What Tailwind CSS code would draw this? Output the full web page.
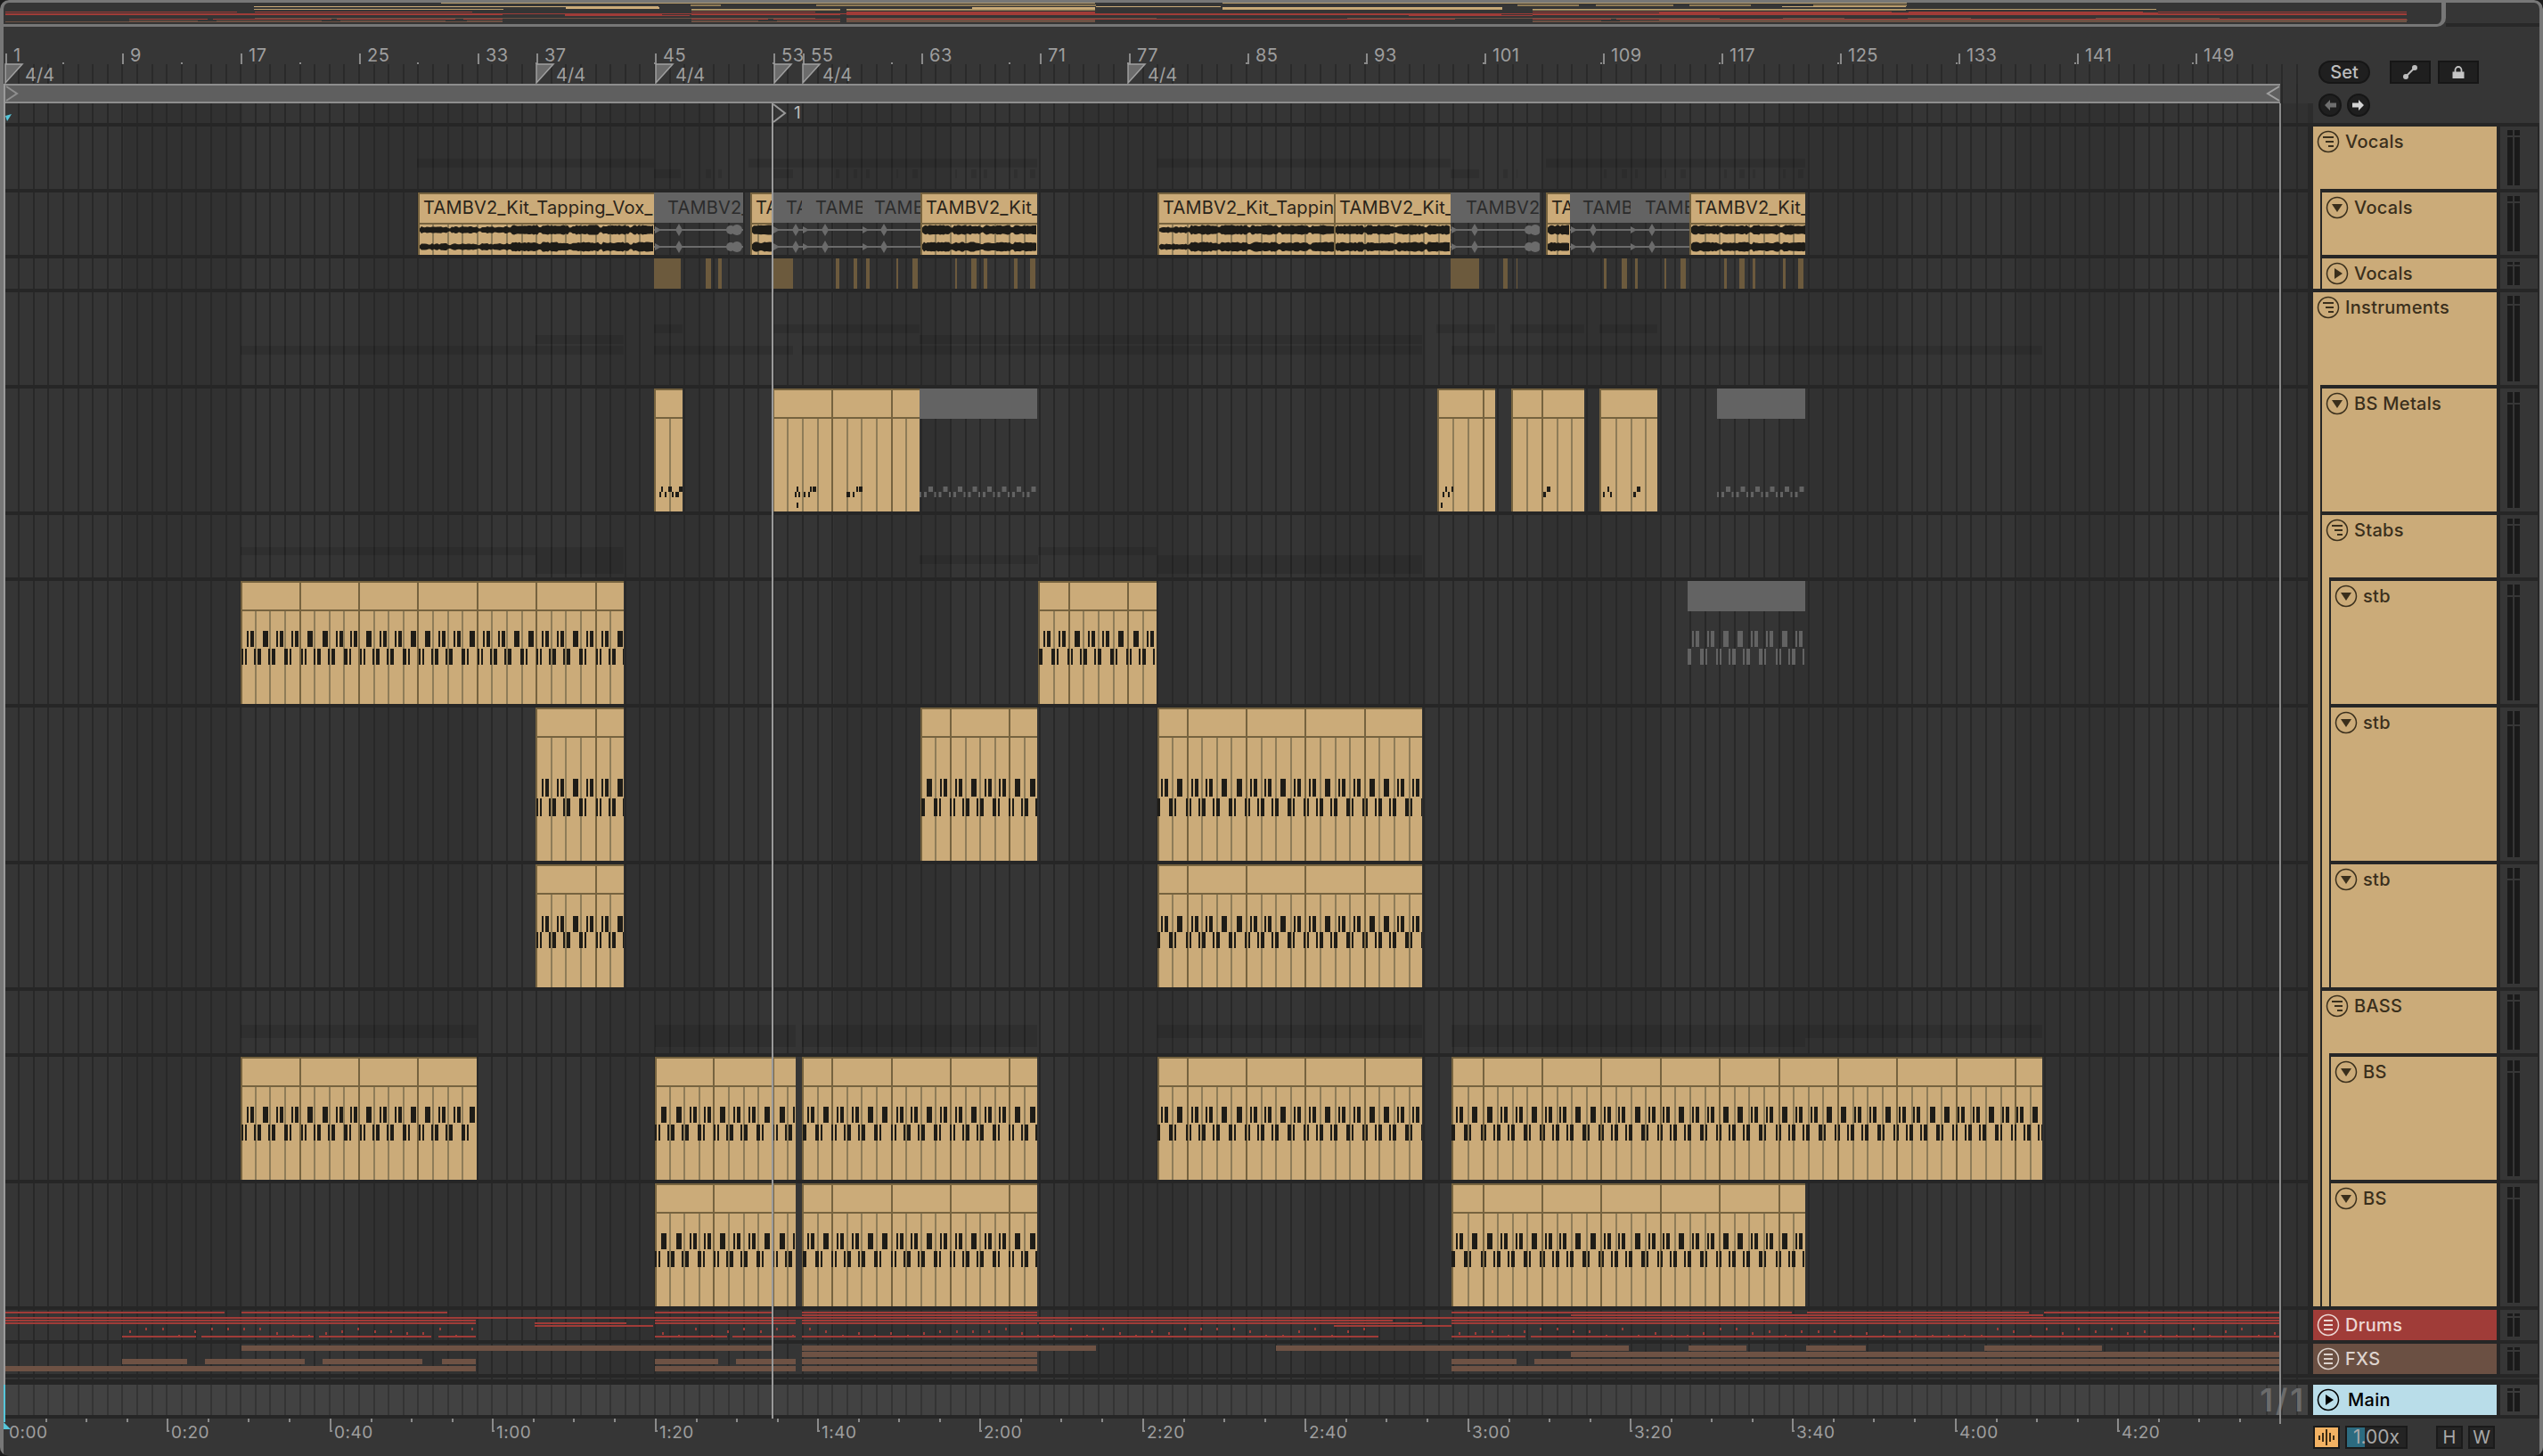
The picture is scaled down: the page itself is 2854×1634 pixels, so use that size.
<!DOCTYPE html>
<html>
<head>
<meta charset="utf-8">
<script src="https://cdn.jsdelivr.net/npm/@tailwindcss/browser@4"></script>
<title>Arrangement</title>
</head>
<body class="bg-[#1c1c1c]">
<div id="app" class="relative w-[2854px] h-[1634px] overflow-hidden rounded-[10px] bg-[#363636] font-['Inter','Liberation_Sans',sans-serif] flex flex-col">

  <!-- overview strip -->
  <div class="flex h-[30px] shrink-0">
    <div id="overview" class="relative w-[2745px] h-[30px] bg-[#353535] border-b-[3px] border-r-[5px] border-[#777777] rounded-br-[10px] overflow-hidden"></div>
    <div class="flex-1 flex flex-col"><div class="flex-1"></div><div class="h-[4px] bg-[#282828]"></div></div>
  </div>

  <!-- header: ruler + locators + transport buttons -->
  <div class="flex h-[108px] shrink-0 pl-[6px]">
    <div class="w-[2584px] flex flex-col">
      <div id="ruler" class="relative h-[42px]"></div>
      <div id="sig" class="relative h-[22px] [background-image:repeating-linear-gradient(90deg,transparent_0,transparent_14.2px,#2a2a2a_14.2px,#2a2a2a_16.2px,transparent_16.2px,transparent_16.6px)]"></div>
      <div class="h-[22px] [background-image:repeating-linear-gradient(90deg,transparent_0,transparent_14.2px,#282828_14.2px,#282828_16.2px,transparent_16.2px,transparent_16.6px)]">
        <div class="relative w-[2553px] h-full bg-[#5f5f5f] border-y-2 border-[#8e8e8e]">
          <svg class="absolute left-[0px] top-0" width="16" height="18"><path d="M1 1 L13 9 L1 17" fill="none" stroke="#8f8f8f" stroke-width="2"/></svg>
          <svg class="absolute right-[0px] top-0" width="16" height="18"><path d="M15 1 L2 9 L15 17" fill="none" stroke="#a0a0a0" stroke-width="2"/></svg>
        </div>
      </div>
      <div id="locrow" class="relative h-[22px] [background-image:repeating-linear-gradient(90deg,transparent_0,transparent_14.2px,#282828_14.2px,#282828_16.2px,transparent_16.2px,transparent_16.6px),repeating-linear-gradient(90deg,#353535_0,#353535_132.8px,#313131_132.8px,#313131_265.6px)]">
        <svg class="absolute left-0 top-[12px]" width="8" height="10"><path d="M0 2 L7 0 L2 8Z" fill="#57c6da"/></svg>
        <svg class="absolute left-[860px] top-0" width="18" height="22"><path d="M2 1 L15 11 L2 21" fill="none" stroke="#9a9a9a" stroke-width="2"/></svg>
        <span class="absolute left-[885px] top-[1px] text-[19px] leading-[20px] text-[#bdbdbd]">1</span>
      </div>
    </div>
    <div class="w-[6px] h-[22px] self-end bg-[#2c2c2c]"></div>
    <div class="flex-1 flex flex-col pl-[6px] pt-[38px] gap-[11px]">
      <div class="flex items-center h-[26px]">
        <div class="w-[58px] h-[26px] rounded-full bg-[#1f1f1f] border-2 border-[#161616] flex items-center justify-center text-[20px] font-medium text-[#bdbdbd]">Set</div>
        <div class="ml-[22px] w-[46px] h-[26px] bg-[#1f1f1f] border-2 border-[#161616] flex items-center justify-center">
          <svg width="18" height="18" viewBox="0 0 18 18"><path d="M4 14 L14 4" stroke="#bdbdbd" stroke-width="2"/><circle cx="4" cy="14" r="3" fill="#bdbdbd"/><circle cx="14" cy="4" r="3" fill="#bdbdbd"/></svg>
        </div>
        <div class="ml-[8px] w-[46px] h-[26px] bg-[#1f1f1f] border-2 border-[#161616] flex items-center justify-center">
          <svg width="16" height="16" viewBox="0 0 16 16"><path d="M4.5 8 V5.5 A3.5 3.5 0 0 1 11.500 5.500 V8" fill="none" stroke="#c4c4c4" stroke-width="1.800"/><rect x="1.500" y="7.500" width="13" height="7.500" fill="#c4c4c4"/></svg>
        </div>
      </div>
      <div class="flex gap-[6px]">
        <div class="w-[26px] h-[26px] rounded-full bg-[#1f1f1f] border-2 border-[#161616] flex items-center justify-center">
          <svg width="16" height="14" viewBox="0 0 16 14"><path d="M8 1 L2 7 L8 13 V9.500 H15 V4.500 H8Z" fill="#6f6f6f"/></svg>
        </div>
        <div class="w-[26px] h-[26px] rounded-full bg-[#1f1f1f] border-2 border-[#161616] flex items-center justify-center">
          <svg width="16" height="14" viewBox="0 0 16 14"><path d="M8 1 L14 7 L8 13 V9.500 H1 V4.500 H8Z" fill="#d4d4d4"/></svg>
        </div>
      </div>
    </div>
  </div>

  <!-- tracks -->
  <div id="tracks" class="flex flex-col gap-[4px] pt-[4px] pb-[4px] pl-[6px] bg-[#262626] shrink-0"></div>

  <!-- bottom: time ruler + status buttons -->
  <div class="flex flex-1 pl-[6px]">
    <div id="timeline" class="relative w-[2584px] h-full"></div>
    <div class="w-[6px]"></div>
    <div class="flex items-start pt-[8px] text-[#a8a8a8]">
      <div class="w-[30px] h-[26px] bg-[#f3b263] border-2 border-[#1a1a1a] flex items-center justify-center">
        <svg width="20" height="18" viewBox="0 0 20 18" fill="#3d2c14"><rect x="1" y="7" width="2" height="5"/><rect x="5" y="4" width="2" height="10"/><rect x="9" y="0" width="2" height="18"/><rect x="13" y="4" width="2" height="10"/><rect x="17" y="7" width="2" height="5"/></svg>
      </div>
      <div class="ml-[6px] relative w-[70px] h-[26px] bg-[#242424] border-2 border-[#1a1a1a] flex items-center justify-center">
        <div class="absolute left-0 top-0 bottom-0 w-[20px] bg-[#2c6b80]"></div>
        <span class="relative text-[21px] leading-[22px]">1.00x</span>
      </div>
      <div class="ml-[32px] w-[30px] h-[26px] bg-[#242424] border-2 border-[#1a1a1a] flex items-center justify-center text-[20px] leading-[22px]">H</div>
      <div class="ml-[6px] w-[30px] h-[26px] bg-[#242424] border-2 border-[#1a1a1a] flex items-center justify-center text-[20px] leading-[22px]">W</div>
    </div>
  </div>

  <!-- playhead-like markers over the arrangement -->
  <div class="absolute left-[4px] top-[94px] h-[1460px] w-[2px] bg-[#9a9a9a]"></div>
  <div class="absolute left-[4px] top-[1554px] h-[42px] w-[2px] bg-[#57c6da]"></div>
  <div class="absolute left-[866px] top-[116px] h-[1476px] w-[2px] bg-[#9a9a9a]"></div>
  <div class="absolute left-[2558px] top-[116px] h-[1482px] w-[2px] bg-[#8a8a8a]"></div>
  <svg class="absolute left-[4px] top-[1596px]" width="12" height="10"><path d="M0 0 L8 8 H0Z" fill="#57c6da"/></svg>

  <!-- window frame -->
  <div class="absolute left-0 right-0 top-0 h-[1640px] rounded-[10px] border-x-[4px] border-t-[3px] border-b-[3px] border-[#777777] pointer-events-none"></div>
</div>

<script>
var C_GRID='[background-image:repeating-linear-gradient(90deg,transparent_0,transparent_14.2px,#282828_14.2px,#282828_16.2px,transparent_16.2px,transparent_16.6px),repeating-linear-gradient(90deg,#353535_0,#353535_132.8px,#313131_132.8px,#313131_265.6px)]';
var C_MAIN='[background-image:repeating-linear-gradient(90deg,transparent_0,transparent_14.2px,#343434_14.2px,#343434_16.2px,transparent_16.2px,transparent_16.6px)] bg-[#424242]';
var EDGE='#76633f', BEAT='#8e7c58', INK='#1e1c17', GRAY='#636363', GRAYN='#6b6b6b';
var seed=7; function rnd(){seed=(seed*16807)%2147483647;return seed/2147483647;}
function lineX(k){return Math.round(3.6+16.6*k);}
function R(x,y,w,h,c){return '<rect x="'+x+'" y="'+y+'" width="'+w+'" height="'+h+'" fill="'+c+'"/>';}

/* ---------- note patterns ---------- */
var SEQ='abaabbaabaabbaabaabbaaba';
function notes(x0,x1,y1,y2,nh,color){
  var s='';
  for(var k=-16;k<160;k++){
    var bx=270+16.55*k, c=SEQ[((k%24)+24)%24];
    var list=c=='a'?[[7.3,2],[11.3,4]]:[[8.8,6]];
    list.forEach(function(n){var x=Math.round(bx+n[0]); if(x+n[1]>x0&&x<x1) s+=R(x-x0,y1,n[1],nh,color);});
  }
  for(var n=-4;n<40;n++){
    var b=270+66.2*n;
    [[1.3,2],[5.3,2],[15.3,2],[19.3,4],[31.3,2],[35.3,4],[49.3,4],[55.3,2]].forEach(function(m){
      var x=Math.round(b+m[0]); if(x+m[1]>x0&&x<x1) s+=R(x-x0,y2,m[1],nh,color);
    });
  }
  return s;
}
function midi(x0,x1,o,h,hh){
  var w=x1-x0,s=R(0,0,w,2,EDGE)+R(0,0,2,h,EDGE)+R(0,hh,w,2,EDGE);
  for(var k=0;k<160;k++){var x=lineX(k); if(x>x0+3&&x<x1-1){
    var major=(k%4)==0;
    s+=R(x-x0,hh+2,2,h-hh,major?EDGE:BEAT);
    if(major)s+=R(x-x0,0,2,hh,EDGE);
  }}
  s+=o;
  return '<div class="absolute top-0 bottom-0 bg-[#cbab79] overflow-hidden" style="left:'+(x0-6)+'px;width:'+w+'px"><svg class="absolute left-0 top-0" width="'+w+'" height="'+h+'">'+s+'</svg></div>';
}
function grayMidi(x0,x1,o,h,hh){
  var w=x1-x0;
  return '<div class="absolute top-0 bottom-0 overflow-hidden" style="left:'+(x0-6)+'px;width:'+w+'px"><div class="h-[34px] bg-[#636363]"></div><svg class="absolute left-0 top-0" width="'+w+'" height="'+h+'">'+o+'</svg></div>';
}
/* ---------- audio clips ---------- */
function wave(w,cy,quiet){
  var up='',dn='';
  for(var x=2;x<=w;x+=2){
    var a=(x<quiet?2.4:4)+rnd()*1.6;
    if(x%34<4) a*=0.6;
    up+='L'+x+' '+(cy-a).toFixed(1)+' ';
    dn='L'+x+' '+(cy+a).toFixed(1)+' '+dn;
  }
  return '<path d="M2 '+cy+' '+up+dn+'Z" fill="'+INK+'"/>';
}
function audio(x0,x1,text,quiet,tx){
  var w=x1-x0,h=70,s=R(0,0,w,2,EDGE)+R(0,0,2,h,EDGE)+R(0,34,w,2,EDGE);
  for(var k=0;k<160;k++){var x=lineX(k); if(x>x0+3&&x<x1-1) s+=R(x-x0,36,2,34,BEAT);}
  s+=wave(w,42,quiet||0)+wave(w,61,quiet||0);
  return '<div class="absolute top-0 bottom-0 bg-[#cbab79] overflow-hidden" style="left:'+(x0-6)+'px;width:'+w+'px">'+
   '<svg class="absolute left-0 top-0" width="'+w+'" height="70">'+s+'</svg>'+
   '<span class="absolute top-0 h-[34px] flex items-center text-[20px] tracking-[0.2px] text-[#2a241a] whitespace-nowrap" style="left:'+(tx||6)+'px">'+text+'</span></div>';
}
function ghostAudio(x0,x1,text,marks,tx){
  var w=x1-x0,s='';
  [42,61].forEach(function(cy){
    s+=R(0,cy-1,w,2,GRAYN);
    marks.forEach(function(m){
      var x=m[1]-x0;
      if(m[0]=='d') s+='<path d="M'+(x-4)+' '+cy+' L'+x+' '+(cy-7)+' L'+(x+4)+' '+cy+' L'+x+' '+(cy+7)+'Z" fill="'+GRAYN+'"/>';
      if(m[0]=='t') s+='<path d="M'+x+' '+(cy-4)+' L'+(x+7)+' '+cy+' L'+x+' '+(cy+4)+'Z" fill="'+GRAYN+'"/>';
      if(m[0]=='b') s+='<circle cx="'+x+'" cy="'+cy+'" r="5" fill="'+GRAYN+'"/><circle cx="'+(x+7)+'" cy="'+cy+'" r="6" fill="'+GRAYN+'"/>';
    });
  });
  return '<div class="absolute top-0 bottom-0 overflow-hidden" style="left:'+(x0-6)+'px;width:'+w+'px">'+
   '<div class="relative h-[34px] bg-[#636363]"><span class="absolute top-0 h-[34px] flex items-center text-[20px] tracking-[0.2px] text-[#2c2c2c] whitespace-nowrap" style="left:'+(tx||15)+'px">'+text+'</span></div>'+
   '<svg class="absolute left-0 top-0" width="'+w+'" height="70">'+s+'</svg></div>';
}
function ghost(x0,x1,y,h){return '<div class="absolute bg-black/10" style="left:'+(x0-6)+'px;width:'+(x1-x0)+'px;top:'+y+'px;height:'+h+'px"></div>';}
function bar(x0,x1,y,h,cl){return '<div class="absolute '+cl+'" style="left:'+(x0-6)+'px;width:'+(x1-x0)+'px;top:'+y+'px;height:'+h+'px"></div>';}

/* ---------- data ---------- */
var folded=[[734,764],[792,798],[806,810],[867,890],[938,942],[958,962],[972,976],[1006,1008],[1024,1030],[1072,1074],[1090,1096],[1104,1108],[1138,1142],[1156,1162],[1628,1660],[1687,1692],[1702,1703],[1800,1803],[1820,1826],[1835,1838],[1868,1870],[1886,1892],[1935,1938],[1952,1958],[1967,1970],[2001,2004],[2018,2024]];
var drumLines=[
 [1472,6,252],[1472,271,502],[1472,735,867],[1472,900,1164],[1472,1629,2011],[1472,2028,2277],[1472,2294,2558],
 [1475,900,1164],[1475,1763,2293],
 [1478,6,2558],
 [1481,6,534],[1481,735,893],[1481,900,1563],[1481,1629,2558],
 [1484,6,534],[1484,600,703],[1484,735,893],[1484,900,1164],[1484,1166,1596],[1484,1629,2558],
 [1487,600,733],[1487,1497,1629],
 [1499,137,220],[1499,226,352],[1499,358,484],[1499,492,534],[1499,735,816],[1499,822,893],[1499,900,1547],[1499,1629,1712],[1499,1718,2558]];
var fxLines=[
 [1510,271,867],[1510,900,1230],[1510,1432,1828],[1510,1895,1960],[1510,2027,2094],[1510,2227,2359],
 [1517,900,1164],[1517,1763,2558],
 [1525,137,210],[1525,230,342],[1525,362,474],[1525,496,534],[1525,735,806],[1525,826,893],[1525,900,1164],[1525,1629,1702],[1525,1722,2558],
 [1533,6,534],[1533,735,893],[1533,900,1164],[1533,1629,2558]];
function content(i,h){
  var s='';
  if(i==0){ // Vocals group overview
    s+=ghost(468,734,36,10)+ghost(840,1164,36,10)+ghost(1299,1628,36,10)+ghost(1735,2026,36,10);
    folded.forEach(function(f){s+=ghost(f[0],f[1],48,10);});
  }
  if(i==1){
    s+=audio(469,734,'TAMBV2_Kit_Tapping_Vox_',100);
    s+=ghostAudio(734,834,'TAMBV2_',[['t',735],['d',762],['b',820]]);
    s+=audio(842,867,'TA');
    s+=ghostAudio(867,900,'TA',[['t',868],['d',893]]);
    s+=ghostAudio(900,968,'TAMB',[['t',901],['d',926]]);
    s+=ghostAudio(968,1033,'TAMB',[['t',968],['d',992]],13);
    s+=audio(1033,1164,'TAMBV2_Kit_');
    s+=audio(1299,1497,'TAMBV2_Kit_Tapping_Vox_',36);
    s+=audio(1497,1628,'TAMBV2_Kit_');
    s+=ghostAudio(1628,1728,'TAMBV2_',[['t',1629],['d',1655],['b',1716]],17);
    s+=audio(1735,1762,'TA');
    s+=ghostAudio(1762,1830,'TAMB',[['t',1763],['d',1788]],14);
    s+=ghostAudio(1830,1896,'TAME',[['t',1830],['d',1854]],16);
    s+=audio(1896,2026,'TAMBV2_Kit_');
  }
  if(i==2){ folded.forEach(function(f){s+=bar(f[0],f[1],0,34,'bg-[#6c5a3d]');}); }
  if(i==3){
    s+=ghost(734,766,36,10)+ghost(867,1032,36,10)+ghost(1612,1678,36,10)+ghost(1695,1778,36,10)+ghost(1795,1860,36,10);
    s+=ghost(601,700,48,10)+ghost(1032,1596,48,10);
    s+=ghost(270,700,60,10)+ghost(734,890,60,10)+ghost(900,1596,60,10)+ghost(1629,2292,60,10);
  }
  if(i==4){
    var small=function(a){var o='';a.forEach(function(n){o+=R(n[0],n[1],n[2],6,INK);});return o;};
    s+=midi(734,766,small([[8,110,2],[6,116,2],[12,116,2],[16,110,4],[20,116,2],[24,116,4],[28,110,4]]),138,32);
    s+=midi(867,1032,small([[25,116,2],[27,110,2],[29,116,2],[35,116,2],[40,116,2],[42,110,2],[45,110,4],[27,128,2],[83,116,4],[90,116,2],[94,110,2],[97,110,4]]),138,32);
    var g='';for(var k=0;k<8;k++){g+=R(10+k*16.5,110,5,6,GRAY)+R(k*16.5,116,2,6,GRAY)+R(5+k*16.5,116,3,6,GRAY);}
    s+=grayMidi(1032,1164,g,138,32);
    s+=midi(1613,1678,small([[6,116,2],[9,110,2],[12,116,2],[16,110,2],[4,128,2]]),138,32);
    s+=midi(1696,1778,small([[36,116,3],[40,110,4]]),138,32);
    s+=midi(1795,1860,small([[4,116,2],[9,110,2],[12,116,2],[38,116,3],[42,110,4]]),138,32);
    var g2='';for(var j=0;j<6;j++){g2+=R(10+j*16.5,110,5,6,GRAY)+R(j*16.5,116,2,6,GRAY)+R(5+j*16.5,116,3,6,GRAY);}
    s+=grayMidi(1927,2026,g2,138,32);
  }
  if(i==5){
    s+=ghost(270,700,36,9)+ghost(1165,1298,36,9);
    s+=ghost(601,700,45,10)+ghost(1032,1165,45,10)+ghost(1299,1596,45,10);
    s+=ghost(601,700,55,11)+ghost(1299,1596,55,11);
  }
  function m(x0,x1,h,hh,a,b,nh){return midi(x0,x1,notes(x0,x1,a,b,nh,INK),h,hh);}
  if(i==6){
    s+=m(270,700,138,32,56,76,18)+m(1165,1298,138,32,56,76,18);
    s+=grayMidi(1894,2026,notes(1894,2026,56,76,18,GRAY),138,32);
  }
  if(i==7){ [[601,700],[1033,1164],[1299,1596]].forEach(function(c){s+=m(c[0],c[1],172,32,80,102,20);}); }
  if(i==8){ [[601,700],[1299,1596]].forEach(function(c){s+=m(c[0],c[1],138,32,58,76,18);}); }
  if(i==9){ s+=ghost(270,535,38,15)+ghost(735,893,38,15)+ghost(900,1164,38,15)+ghost(1299,1596,38,15)+ghost(1629,2292,38,15);
            s+=ghost(735,893,53,10)+ghost(900,1164,53,10)+ghost(1629,2026,53,10); }
  if(i==10){ [[270,535],[735,893],[900,1164],[1299,1596],[1629,2292]].forEach(function(c){s+=m(c[0],c[1],138,32,56,76,18);}); }
  if(i==11){ [[735,893],[900,1164],[1629,2026]].forEach(function(c){s+=m(c[0],c[1],138,32,56,76,18);}); }
  if(i==12){
    drumLines.forEach(function(l){s+=bar(l[1],l[2],l[0]-1470,2,'bg-[#a03c38]');});
    [[137,534],[735,893],[900,1547],[1629,2558]].forEach(function(r){
      for(var x=r[0]+8;x<r[1];x+=18.3){ s+=bar(Math.round(x),Math.round(x)+2,[20,25,28,23][Math.floor(rnd()*4)],3,'bg-[#a03c38]'); }
    });
  }
  if(i==13){ fxLines.forEach(function(l){ s+=bar(l[1],l[2],l[0]-1508,6,'bg-[#6e5244]');}); }
  return s;
}

/* ---------- icons ---------- */
function icon(kind,col){
  var c='<circle cx="13" cy="13" r="11.500" fill="none" stroke="'+col+'" stroke-width="1.500"/>',p='';
  if(kind=='g') p='<path d="M7 8 H19 M10 13 H19 M13 18 H19" stroke="'+col+'" stroke-width="2"/>';
  if(kind=='f') p='<path d="M8 8 H18 M8 13 H18 M8 18 H18" stroke="'+col+'" stroke-width="2"/>';
  if(kind=='d') p='<path d="M7 9 H19 L13 18Z" fill="'+col+'"/>';
  if(kind=='r') p='<path d="M10 7 L19 13 L10 19Z" fill="'+col+'"/>';
  return '<svg class="shrink-0 mt-[4px]" width="26" height="26" viewBox="0 0 26 26">'+c+p+'</svg>';
}
var rows=[
 [70,'Vocals',0,'g'],[70,'Vocals',1,'d'],[34,'Vocals',1,'r'],
 [104,'Instruments',0,'g'],[138,'BS Metals',1,'d'],[70,'Stabs',1,'g'],
 [138,'stb',2,'d'],[172,'stb',2,'d'],[138,'stb',2,'d'],
 [70,'BASS',1,'g'],[138,'BS',2,'d'],[138,'BS',2,'d'],
 [34,'Drums',0,'f','red'],[34,'FXS',0,'f','brown']];
var html='';
rows.forEach(function(r,i){
  var h=r[0],lv=r[2],t=r[4];
  var bg=t=='red'?'bg-[#a03c38]':t=='brown'?'bg-[#6b5043]':'bg-[#cbab79]';
  var fg=t=='red'?'text-[#ecd7d3]':t=='brown'?'text-[#ddd3cd]':'text-[#3a2f1c]';
  var col=t=='red'?'#ecd7d3':t=='brown'?'#ddd3cd':'#3a2f1c';
  var nest='';
  if(lv>=1) nest+='<div class="absolute left-0 top-[-4px] bottom-0 w-[8px] bg-[#cbab79]"></div><div class="absolute left-[8px] top-[-4px] bottom-0 w-[2px] bg-[#262626]"></div>';
  if(lv==2) nest+='<div class="absolute left-[10px] top-[-4px] bottom-0 w-[8px] bg-[#cbab79]"></div><div class="absolute left-[18px] top-0 bottom-0 w-[2px] bg-[#262626]"></div>';
  var pl=lv==0?'pl-[4px]':lv==1?'pl-[14px]':'pl-[24px]';
  var seg=Math.round(h*0.087); if(h<40) seg=3;
  html+='<div class="flex" style="height:'+h+'px">'+
    '<div class="relative w-[2584px] overflow-hidden '+C_GRID+'">'+content(i,h)+'</div>'+
    '<div class="w-[6px]"></div>'+
    '<div class="relative w-[206px] flex gap-[6px] '+pl+' '+bg+'">'+nest+icon(r[3],col)+
      '<span class="mt-[5px] h-[24px] leading-[24px] text-[20px] font-medium tracking-[0.3px] whitespace-nowrap '+fg+'">'+r[1]+'</span></div>'+
    '<div class="w-[4px]"></div>'+
    '<div class="w-[42px] bg-[#363636] pl-[8px] pt-[4px] pb-[4px] flex gap-[2px]">'+
      '<div class="w-[6px] flex flex-col gap-[2px]"><div class="bg-[#1a1a1a]" style="height:'+seg+'px"></div><div class="flex-1 bg-[#1a1a1a]"></div></div>'+
      '<div class="w-[6px] flex flex-col gap-[2px]"><div class="bg-[#1a1a1a]" style="height:'+seg+'px"></div><div class="flex-1 bg-[#1a1a1a]"></div></div>'+
    '</div></div>';
});
/* thin separator + Main */
html+='<div class="flex h-[2px]"><div class="w-[2584px] '+C_GRID+'"></div><div class="flex-1 bg-[#303030]"></div></div>';
html+='<div class="flex h-[34px] mt-[2px]">'+
  '<div class="relative w-[2584px] '+C_MAIN+'"><span class="absolute right-[2px] top-[-3px] text-[35px] leading-[40px] font-semibold text-[#6b6b6b] tracking-[3px]">1/1</span></div>'+
  '<div class="w-[6px]"></div>'+
  '<div class="w-[206px] flex gap-[9px] pl-[4px] bg-[#b9dde9]">'+icon('r','#000000')+'<span class="mt-[5px] h-[24px] leading-[24px] text-[20px] font-medium tracking-[0.3px] text-black">Main</span></div>'+
  '<div class="w-[4px]"></div>'+
  '<div class="w-[42px] bg-[#3a3a3a] pl-[8px] pt-[4px] pb-[4px] flex gap-[2px]">'+
   '<div class="w-[6px] flex flex-col gap-[2px]"><div class="h-[3px] bg-[#1a1a1a]"></div><div class="flex-1 bg-[#1a1a1a]"></div></div>'+
   '<div class="w-[6px] flex flex-col gap-[2px]"><div class="h-[3px] bg-[#1a1a1a]"></div><div class="flex-1 bg-[#1a1a1a]"></div></div></div></div>';
document.getElementById('tracks').innerHTML=html;

/* ---------- ruler ---------- */
var rh='';
[1,9,17,25,33,37,45,53,55,63,71,77,85,93,101,109,117,125,133,141,149].forEach(function(b){
  var x=Math.round(4+16.62*(b-1))-6; if(b==1)x=0;
  rh+='<div class="absolute top-[30px] w-[2px] h-[12px] bg-[#8a8a8a]" style="left:'+x+'px"></div>'+
      '<span class="absolute top-[21px] text-[20px] leading-[22px] text-[#9e9e9e] tracking-[0.5px]" style="left:'+(x+9)+'px">'+b+'</span>';
});
for(var b=5;b<155;b+=8){ rh+='<div class="absolute top-[40px] w-[2px] h-[2px] bg-[#8a8a8a]" style="left:'+(lineX(b-1)-6)+'px"></div>'; }
document.getElementById('ruler').innerHTML=rh;
var sh='';
[[5,1],[601,1],[735,1],[868,0],[900,1],[1265,1]].forEach(function(s){
  sh+='<svg class="absolute top-[-1px]" style="left:'+(s[0]-6)+'px" width="22" height="23"><path d="M1 1 H20 L1 22Z" fill="#6c6c6c" stroke="#a0a0a0" stroke-width="1.500"/></svg>';
  if(s[1]) sh+='<span class="absolute top-[1px] text-[20px] leading-[22px] text-[#a0a0a0]" style="left:'+(s[0]+17)+'px">4/4</span>';
});
document.getElementById('sig').innerHTML=sh;

/* ---------- time ruler ---------- */
var th='';
for(var i=0;i<14;i++){
  var lab=Math.floor(i*20/60)+':'+('0'+(i*20%60)).slice(-2), x=Math.round(4+182.4*i);
  if(i>0) th+='<div class="absolute top-0 h-[15px] w-[2px] bg-[#8a8a8a]" style="left:'+(x-5)+'px"></div><div class="absolute top-[13px] h-[2px] w-[3px] bg-[#8a8a8a]" style="left:'+(x-5)+'px"></div>';
  for(var j=1;j<4;j++){ th+='<div class="absolute top-0 h-[4px] w-[2px] bg-[#8a8a8a]" style="left:'+Math.round(x-5+45.6*j)+'px"></div>'; }
  th+='<span class="absolute top-[4px] text-[19px] leading-[24px] text-[#9e9e9e] tracking-[0.5px]" style="left:'+x+'px">'+lab+'</span>';
}
document.getElementById('timeline').innerHTML=th;

/* ---------- overview ---------- */
var K=1.056, ov='';
function ob(x0,x1,y,h,cl){ov+='<div class="absolute '+cl+'" style="left:'+Math.round(x0*K)+'px;width:'+Math.max(1,Math.round((x1-x0)*K))+'px;top:'+y+'px;height:'+h+'px"></div>';}
[[469,1164,3],[1299,2026,3]].forEach(function(a){ob(a[0],a[1],a[2],1,'bg-[#b79c6c]');});
[[734,766,5],[867,1164,5],[1613,1678,5],[1696,1778,5],[1795,1860,5],[1927,2026,5]].forEach(function(a){ob(a[0],a[1],a[2],2,'bg-[#8f7a55]');});
[[270,700,7],[1165,1298,7],[1894,2026,7]].forEach(function(a){ob(a[0],a[1],a[2],1,'bg-[#cbab79]');});
[[601,700,8],[1033,1164,8],[1299,1596,8]].forEach(function(a){ob(a[0],a[1],a[2],2,'bg-[#cbab79]');});
[[270,535,10],[735,893,10],[900,1164,10],[1299,1596,10],[1629,2292,10]].forEach(function(a){ob(a[0],a[1],a[2],1,'bg-[#b79c6c]');});
[[735,893,11],[900,1164,11],[1629,2026,11]].forEach(function(a){ob(a[0],a[1],a[2],1,'bg-[#8f7a55]');});
drumLines.forEach(function(l){ var y={1472:13,1475:14,1478:15,1481:16,1484:16,1487:17,1499:21}[l[0]]; ob(l[1],l[2],y,1,'bg-[#a03c38]'); });
fxLines.forEach(function(l){ var y={1510:20,1517:22,1525:23,1533:24}[l[0]]; ob(l[1],l[2],y,1,'bg-[#6e5244]'); });
document.getElementById('overview').innerHTML=ov;
</script>
</body>
</html>
